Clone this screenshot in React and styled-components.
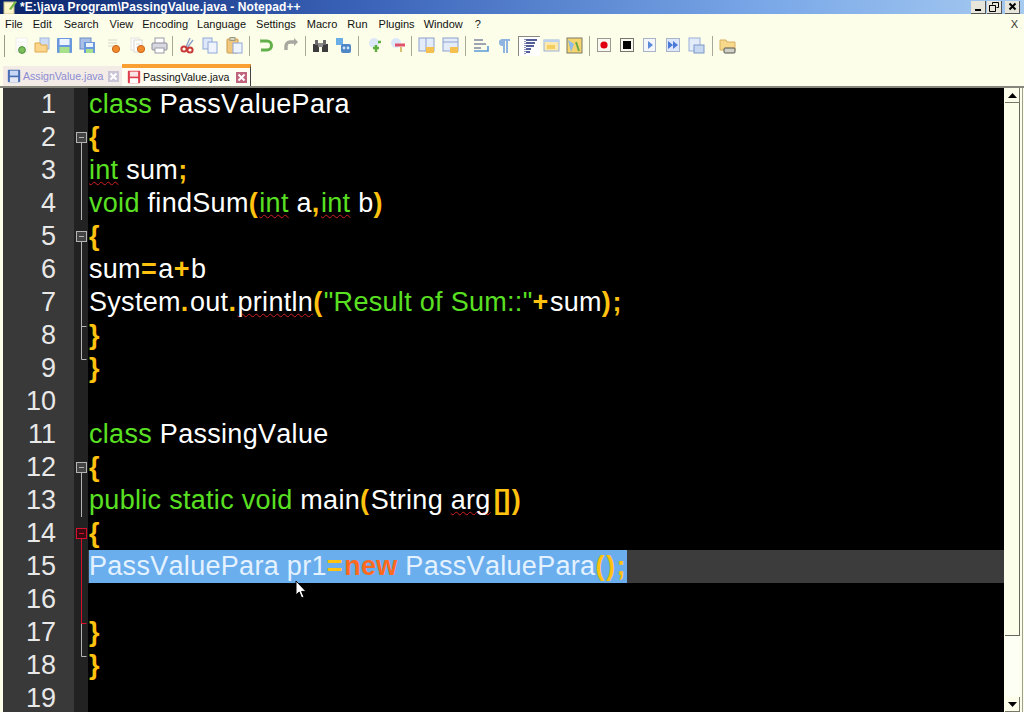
import React from "react";
import styled, { createGlobalStyle } from "styled-components";

const CREAM = "#fcfee9";

const GlobalStyle = createGlobalStyle`
	html, body {
		margin: 0;
		padding: 0;
		width: 1024px;
		height: 712px;
		overflow: hidden;
		background: ${CREAM};
	}
`;

const Win = styled.div`
	position: relative;
	width: 1024px;
	height: 712px;
	overflow: hidden;
	display: flex;
	flex-direction: column;
	background: ${CREAM};
	font-family: "Liberation Sans", Arial, sans-serif;
`;

const TitleBar = styled.div`
	flex: none;
	height: 14px;
	display: flex;
	align-items: center;
	padding: 0 4px 0 3px;
	background: linear-gradient(90deg, #0a246a 0%, #3a63b8 35%, #7aa8e8 75%, #a6caf0 100%);
	overflow: hidden;
`;

const TitleText = styled.span`
	margin-left: 3px;
	flex: 1;
	font-size: 12px;
	letter-spacing: 0.1px;
	font-weight: bold;
	line-height: 14px;
	color: #fff;
	white-space: pre;
`;

const WinBtn = styled.div`
	width: 15px;
	height: 13px;
	margin-left: ${({ $gap }) => $gap || 1}px;
	background: #e8e6da;
	border-right: 1px solid #555;
	border-bottom: 1px solid #555;
	box-sizing: border-box;
	display: flex;
	align-items: center;
	justify-content: center;
`;

const MenuBar = styled.div`
	flex: none;
	height: 19px;
	display: flex;
	align-items: center;
	font-size: 11px;
	color: #111;
`;

const MenuItem = styled.span`
	margin-left: ${({ $x }) => $x}px;
`;

const MenuClose = styled.span`
	margin-left: auto;
	margin-right: 6px;
	font-size: 11px;
	color: #333;
`;

const ToolBar = styled.div`
	flex: none;
	height: 25px;
	display: flex;
	align-items: center;
	padding-left: 4px;
`;

const Grip = styled.div`
	width: 1px;
	height: 22px;
	background: #9a9a88;
	margin-right: 7px;
`;

const Tool = styled.div`
	flex: none;
	width: ${({ $w }) => $w || 23}px;
	height: 20px;
	margin-left: ${({ $pressed }) => ($pressed ? 5 : 0)}px;
	box-sizing: border-box;
	display: flex;
	align-items: center;
	justify-content: center;
	${({ $pressed }) => $pressed && "border-left: 1px solid #8a8a80; border-top: 1px solid #8a8a80; background: #fff;"}
`;

const ToolSep = styled.div`
	flex: none;
	width: 1px;
	height: 20px;
	margin: 0 3px;
	background: #a8a898;
`;

const TabBar = styled.div`
	flex: none;
	height: 22px;
	margin-top: 6px;
	padding-left: 3px;
	display: flex;
	align-items: flex-end;
`;

const Tab = styled.div`
	box-sizing: border-box;
	height: ${({ $active }) => ($active ? 22 : 20)}px;
	width: ${({ $active }) => ($active ? 129 : 119)}px;
	display: flex;
	align-items: center;
	padding-left: ${({ $active }) => ($active ? 5 : 4)}px;
	font-size: 10.6px;
	color: ${({ $active }) => ($active ? "#111" : "#8c8cd2")};
	background: ${({ $active }) => ($active ? "#fffef2" : "#f2ebe6")};
	border-top: ${({ $active }) => ($active ? "4px solid #fa9f32" : "none")};
	border-right: ${({ $active }) => ($active ? "1px solid #444" : "none")};
`;

const TabLabel = styled.span`
	margin-left: 2px;
	width: ${({ $w }) => $w}px;
	white-space: nowrap;
`;

const TabClose = styled.div`
	width: 11px;
	height: 11px;
	background: ${({ $active }) => ($active ? "#c0647e" : "#c9c4d6")};
	display: flex;
	align-items: center;
	justify-content: center;
`;

const Workspace = styled.div`
	flex: 1;
	min-height: 0;
	display: flex;
	padding-left: 3px;
	border-top: 2px solid #86867c;
`;

const Editor = styled.div`
	flex: none;
	width: 1001px;
	background: #000;
	display: flex;
	flex-direction: column;
`;

const Row = styled.div`
	flex: none;
	height: 33px;
	display: flex;
`;

const LineNo = styled.div`
	flex: none;
	box-sizing: border-box;
	width: 71px;
	padding-right: 18px;
	background: #393939;
	color: #e8e8e8;
	text-align: right;
	font-size: 27px;
	line-height: 33px;
`;

const FoldCell = styled.div`
	flex: none;
	width: 14px;
	height: 33px;
	background: #222;
`;

const Code = styled.div`
	flex: 1;
	padding-left: 1px;
	background: ${({ $current }) => ($current ? "#3c3c3c" : "#000")};
	font-size: 27px;
	line-height: 33px;
	letter-spacing: 0.3px;
	white-space: pre;
	font-kerning: none;
	color: #fff;
`;

const Selection = styled.span`
	display: inline-block;
	height: 33px;
	background: #6aaeee;
	color: #e4f2ff;
`;

const KIND = {
	key: "color: #5ae022;",
	op: "color: #ffc20e; font-weight: bold; letter-spacing: 1.6px;",
	bracket: "color: #ffc20e; font-weight: bold; letter-spacing: -1.5px; margin-left: 3px; margin-right: 3px;",
	str: "color: #5ae022;",
	kw: "color: #ff6a1e; font-weight: bold;",
};

const Tok = styled.span`
	${({ $kind }) => KIND[$kind] || ""}
	${({ $wavy }) =>
		$wavy &&
		"text-decoration: underline wavy #d02020 1px; text-underline-offset: 2px; text-decoration-skip-ink: none;"}
`;

const Scrollbar = styled.div`
	flex: none;
	width: 15px;
	margin-left: 1px;
	display: flex;
	flex-direction: column;
	background: #fefff4;
`;

const ScrollBtn = styled.div`
	flex: none;
	height: 15px;
	box-sizing: border-box;
	background: ${CREAM};
	border-right: 1px solid #77776a;
	border-bottom: 1px solid #77776a;
	display: flex;
	align-items: center;
	justify-content: center;
`;

const Thumb = styled.div`
	flex: none;
	height: 533px;
	box-sizing: border-box;
	background: ${CREAM};
	border-right: 1px solid #66665a;
	border-bottom: 1px solid #66665a;
`;

const Track = styled.div`
	flex: 1;
`;

const RightEdge = styled.div`
	flex: none;
	width: 1px;
	margin-left: 2px;
	background: #a0a090;
`;

const MouseArrow = styled.svg`
	position: absolute;
	left: 295px;
	top: 580px;
`;

// toolbar pictures

const Floppy = ({ c = "#6a98dc", l = "#a8e08c" }) => (
	<svg width="17" height="17" viewBox="0 0 17 17">
		<rect x="1" y="1" width="15" height="15" rx="1" fill={c} />
		<rect x="3.5" y="2" width="10" height="6" fill="#eef4ff" />
		<rect x="3.5" y="10" width="10" height="6" fill={l} />
	</svg>
);

const Doc = ({ x = 3, y = 1, w = 11, h = 14, c = "#d6d6e0" }) => (
	<g>
		<rect x={x} y={y} width={w} height={h} fill="#fff" stroke={c} />
		<path d={`M${x + 2} ${y + 4}h${w - 4}M${x + 2} ${y + 7}h${w - 4}`} stroke={c} />
	</g>
);

const S = ({ children }) => (
	<svg width="17" height="17" viewBox="0 0 17 17">
		{children}
	</svg>
);

const icons = {
	new: (
		<S>
			<Doc c="#efefe6" />
			<circle cx="9" cy="13" r="3.4" fill="#7cbf5a" stroke="#4f8f3a" />
		</S>
	),
	open: (
		<S>
			<rect x="6" y="1" width="9" height="11" fill="#cfdcf5" stroke="#9db5dc" />
			<path d="M1 6h5l1 2h6v7H1z" fill="#fbd68a" stroke="#e0a84e" />
		</S>
	),
	save: <Floppy />,
	saveAll: (
		<S>
			<rect x="1" y="1" width="11" height="11" fill="#a9bfe6" stroke="#6d8cc8" />
			<rect x="5" y="5" width="11" height="11" fill="#6a98dc" />
			<rect x="7" y="6" width="7" height="4" fill="#eef4ff" />
			<rect x="7" y="12" width="7" height="4" fill="#a8e08c" />
		</S>
	),
	close: (
		<S>
			<path d="M3 3h9M3 6h9M3 9h6" stroke="#d8d8d0" />
			<circle cx="11" cy="12" r="3.6" fill="#f08a2c" stroke="#c8641a" />
		</S>
	),
	closeAll: (
		<S>
			<Doc x={1} y={1} w={8} h={12} c="#e4e4dc" />
			<Doc x={4} y={3} w={8} h={12} c="#d8d8d0" />
			<circle cx="11" cy="12" r="3.6" fill="#f08a2c" stroke="#c8641a" />
		</S>
	),
	print: (
		<S>
			<rect x="4" y="1" width="9" height="6" fill="#fff" stroke="#9a9aa8" />
			<rect x="1" y="6" width="15" height="7" rx="1" fill="#d8d8e0" stroke="#8a8a98" />
			<rect x="4" y="11" width="9" height="5" fill="#fff" stroke="#9a9aa8" />
		</S>
	),
	cut: (
		<S>
			<path d="M11 1L7 10M14 3L8 11" stroke="#8fa0c8" strokeWidth="1.4" />
			<circle cx="5" cy="12" r="2.6" fill="none" stroke="#c83a3a" strokeWidth="2" />
			<circle cx="11" cy="13" r="2.6" fill="none" stroke="#c83a3a" strokeWidth="2" />
		</S>
	),
	copy: (
		<S>
			<rect x="1" y="1" width="9" height="11" fill="#dfe8fa" stroke="#8fa8d8" />
			<rect x="6" y="5" width="9" height="11" fill="#eef3fd" stroke="#8fa8d8" />
		</S>
	),
	paste: (
		<S>
			<rect x="1" y="2" width="11" height="14" rx="1" fill="#f2c77e" stroke="#c89a4e" />
			<rect x="4" y="0.5" width="5" height="3" fill="#d8d8c8" stroke="#a09a80" />
			<rect x="7" y="6" width="9" height="10" fill="#eef3fd" stroke="#8fa8d8" />
		</S>
	),
	undo: (
		<S>
			<path d="M3 4h6a4 4 0 0 1 0 9H3" fill="none" stroke="#62b04a" strokeWidth="3" />
			<path d="M3 1v6l-1-3z" fill="#62b04a" />
		</S>
	),
	redo: (
		<S>
			<path d="M14 5H8a4 4 0 0 0-4 4v4" fill="none" stroke="#a8a8a0" strokeWidth="3.4" />
			<path d="M12 1l4 4-4 4z" fill="#a8a8a0" />
		</S>
	),
	find: (
		<S>
			<rect x="1" y="7" width="6" height="8" fill="#3c3c3c" />
			<rect x="10" y="7" width="6" height="8" fill="#3c3c3c" />
			<rect x="3" y="3" width="3" height="5" fill="#6a6a6a" />
			<rect x="11" y="3" width="3" height="5" fill="#6a6a6a" />
			<rect x="6" y="6" width="5" height="4" fill="#8a8a8a" />
		</S>
	),
	replace: (
		<S>
			<rect x="1" y="1" width="7" height="7" fill="#6aaee8" />
			<rect x="6" y="7" width="10" height="9" rx="2" fill="#4f86c8" />
			<circle cx="9" cy="11" r="1.4" fill="#cfe4fa" />
			<circle cx="13" cy="11" r="1.4" fill="#cfe4fa" />
		</S>
	),
	zoomIn: (
		<S>
			<circle cx="7" cy="6" r="5" fill="#dce8fa" />
			<path d="M11 5h3M9 8v7M6 11h6" stroke="#5cae3e" strokeWidth="2.4" />
		</S>
	),
	zoomOut: (
		<S>
			<circle cx="6" cy="6" r="5" fill="#dce8fa" />
			<path d="M5 8h10" stroke="#e0526a" strokeWidth="3" />
			<path d="M11 10v5" stroke="#d8c070" strokeWidth="2" />
		</S>
	),
	syncV: (
		<S>
			<rect x="1" y="1" width="15" height="13" fill="#e4ecfa" stroke="#8aa2d0" />
			<path d="M8 1v13" stroke="#8aa2d0" />
			<rect x="8" y="10" width="8" height="6" fill="#f4c050" />
		</S>
	),
	syncH: (
		<S>
			<rect x="1" y="1" width="15" height="13" fill="#e4ecfa" stroke="#8aa2d0" />
			<path d="M1 5h15" stroke="#8aa2d0" />
			<rect x="8" y="10" width="8" height="6" fill="#f4c050" />
		</S>
	),
	wrap: (
		<S>
			<path d="M1 3h9M1 7h12M1 11h7" stroke="#3c4c7a" strokeWidth="1.2" />
			<path d="M1 14h14V9" fill="none" stroke="#5a9ad8" strokeWidth="1.6" />
		</S>
	),
	para: (
		<S>
			<path d="M7 2h8v2h-2v12h-2V4h-1v12H8V9a3.5 3.5 0 0 1-1-7z" fill="#8fb4e0" />
		</S>
	),
	guide: (
		<S>
			<path d="M4 1v15" stroke="#1c2a78" strokeDasharray="1 1" />
			<path d="M5 2h11M5 5h9M5 8h8M5 11h5M5 14h4" stroke="#1c2a78" strokeWidth="1.6" />
		</S>
	),
	panel: (
		<S>
			<rect x="1" y="3" width="15" height="11" fill="#fbe9b0" stroke="#9ab4dc" />
			<rect x="1" y="3" width="15" height="2" fill="#bcd2f0" />
			<rect x="4" y="8" width="8" height="4" fill="#f4cf60" />
		</S>
	),
	map: (
		<S>
			<rect x="1" y="1" width="15" height="15" fill="#f6d46e" stroke="#7a7a68" />
			<path d="M2 3l6 4-3 8" fill="#8fbce8" />
			<path d="M10 5l3 9" stroke="#6aa84a" strokeWidth="2" />
		</S>
	),
	rec: (
		<S>
			<rect x="1.5" y="1.5" width="13" height="13" fill="#f8f8f0" stroke="#9a9a90" />
			<circle cx="8" cy="8" r="3.6" fill="#e00010" />
		</S>
	),
	stop: (
		<S>
			<rect x="1.5" y="1.5" width="13" height="13" fill="#f8f8f0" stroke="#77776c" />
			<rect x="4" y="4" width="8" height="8" fill="#000" />
		</S>
	),
	play: (
		<S>
			<rect x="1.5" y="1.5" width="12" height="13" fill="#f4f6fa" stroke="#a8b4c8" />
			<path d="M6 4l5 4-5 4z" fill="#5a8ad8" />
		</S>
	),
	playMany: (
		<S>
			<rect x="1.5" y="1.5" width="13" height="13" fill="#dfe8fa" stroke="#a8b4c8" />
			<path d="M3 4l5 4-5 4zM8 4l5 4-5 4z" fill="#4a7ad8" />
		</S>
	),
	saveMacro: (
		<S>
			<rect x="1" y="1" width="11" height="13" fill="#e4ecfa" stroke="#9ab0d8" />
			<rect x="6" y="8" width="10" height="8" fill="#c8d8f0" stroke="#7a98c8" />
		</S>
	),
	folder: (
		<S>
			<path d="M1 3h6l1 2h8v8H1z" fill="#f8d98c" stroke="#d8b060" />
			<rect x="5" y="11" width="11" height="5" rx="1" fill="#d0d0c4" stroke="#555" />
		</S>
	),
};

const toolbar = [
	["new", 19], ["open", 22], ["save"], ["saveAll"], ["close", 29], ["closeAll", 21], ["print", 20], "sep",
	["cut"], ["copy"], ["paste", 24], "sep",
	["undo", 26], ["redo"], "sep",
	["find"], ["replace"], "sep",
	["zoomIn", 26], ["zoomOut", 20], "sep",
	["syncV"], ["syncH", 24], "sep",
	["wrap", 25], ["para", 19], ["guide", 22, true], ["panel"], ["map"], "sep",
	["rec"], ["stop"], ["play"], ["playMany", 22], ["saveMacro", 25], "sep",
	["folder"],
];

const menus = [
	["File", 5], ["Edit", 10], ["Search", 12], ["View", 11], ["Encoding", 9], ["Language", 9], ["Settings", 10],
	["Macro", 11], ["Run", 10], ["Plugins", 11], ["Window", 9], ["?", 12],
];

const t = (text) => ({ text });
const k = (text) => ({ text, kind: "key" });
const o = (text) => ({ text, kind: "op" });
const w = (text, kind) => ({ text, kind, wavy: true });

const lines = [
	{ code: [k("class"), t(" PassValuePara")] },
	{ fold: "box", code: [o("{")] },
	{ fold: "line", code: [w("int", "key"), t(" sum"), o(";")] },
	{
		fold: "line",
		code: [k("void"), t(" findSum"), o("("), w("int", "key"), t(" a"), o(","), w("int", "key"), t(" b"), o(")")],
	},
	{ fold: "box", code: [o("{")] },
	{ fold: "line", code: [t("sum"), o("="), t("a"), o("+"), t("b")] },
	{
		fold: "line",
		code: [
			t("System"), o("."), t("out"), o("."), w("println"), o("("),
			{ text: '"Result of Sum::"', kind: "str" }, o("+"), t("sum"), o(")"), o(";"),
		],
	},
	{ fold: "tee", code: [o("}")] },
	{ fold: "end", code: [o("}")] },
	{ code: [] },
	{ code: [k("class"), t(" PassingValue")] },
	{ fold: "box", code: [o("{")] },
	{
		fold: "line",
		code: [
			k("public static void"), t(" main"), o("("), t("String "), w("arg"),
			{ text: "[]", kind: "bracket" }, o(")"),
		],
	},
	{ fold: "redBox", code: [o("{")] },
	{
		fold: "redLine",
		current: true,
		selected: true,
		code: [t("PassValuePara pr1"), o("="), { text: "new", kind: "kw" }, t(" PassValuePara"), o("()"), o(";")],
	},
	{ fold: "redLine", code: [] },
	{ fold: "redEnd", code: [o("}")] },
	{ fold: "end", code: [o("}")] },
	{ code: [] },
];

const FoldMark = ({ type }) => {
	if (!type) return null;
	const grey = "#b4b4b4";
	const red = "#d81030";
	const isRed = type.startsWith("red");
	const c = isRed ? red : grey;
	return (
		<svg width="14" height="33" viewBox="0 0 14 33" style={{ display: "block" }}>
			{(type === "box" || type === "redBox") && (
				<g>
					<path d="M7.5 22v11" stroke={c} />
					<rect x="2.5" y="11.5" width="10" height="10" fill={isRed ? "#3a0a10" : "#444"} stroke={c} />
					<path d="M5 16.5h5" stroke={c} />
				</g>
			)}
			{(type === "line" || type === "redLine") && <path d="M7.5 0v33" stroke={c} />}
			{type === "tee" && <path d="M7.5 0v33M7.5 7.5h5" stroke={grey} />}
			{type === "end" && <path d="M7.5 0v7.5h5" fill="none" stroke={grey} />}
			{type === "redEnd" && (
				<g>
					<path d="M7.5 7v26" stroke={grey} />
					<path d="M7.5 0v7.5h5" fill="none" stroke={red} />
				</g>
			)}
		</svg>
	);
};

const Cross = ({ c = "#fff" }) => (
	<svg width="9" height="9" viewBox="0 0 9 9">
		<path d="M1.5 1.5l6 6M7.5 1.5l-6 6" stroke={c} strokeWidth="2" />
	</svg>
);

const renderTokens = (code) =>
	code.map((tok, i) => (
		<Tok key={i} $kind={tok.kind} $wavy={tok.wavy}>
			{tok.text}
		</Tok>
	));

export default function App() {
	return (
		<Win>
			<GlobalStyle />
			<TitleBar>
				<svg width="14" height="14" viewBox="0 0 14 14">
					<rect x="1" y="2" width="10" height="12" fill="#fdf6c8" stroke="#c8c090" />
					<path d="M6 9l6-8 2 1-6 8z" fill="#7ab648" />
				</svg>
				<TitleText>{"*E:\\java Program\\PassingValue.java - Notepad++"}</TitleText>
				<WinBtn>
					<svg width="9" height="9" viewBox="0 0 9 9">
						<rect x="1" y="7" width="6" height="2" fill="#000" />
					</svg>
				</WinBtn>
				<WinBtn>
					<svg width="10" height="10" viewBox="0 0 10 10">
						<path d="M3.5 2.5V.5h6v5h-2M.5 3.5h6v6h-6zM.5 3.5h6" fill="none" stroke="#000" />
					</svg>
				</WinBtn>
				<WinBtn $gap={3}>
					<Cross c="#000" />
				</WinBtn>
			</TitleBar>
			<MenuBar>
				{menus.map(([label, x]) => (
					<MenuItem key={label} $x={x}>
						{label}
					</MenuItem>
				))}
				<MenuClose>X</MenuClose>
			</MenuBar>
			<ToolBar>
				<Grip />
				{toolbar.map((item, i) =>
					item === "sep" ? (
						<ToolSep key={i} />
					) : (
						<Tool key={i} $w={item[1]} $pressed={item[2]}>
							{icons[item[0]]}
						</Tool>
					)
				)}
			</ToolBar>
			<TabBar>
				<Tab>
					<svg width="14" height="14" viewBox="0 0 17 17">
						<rect x="1" y="1" width="15" height="15" rx="1" fill="#4a6fb4" />
						<rect x="3.5" y="2" width="10" height="6" fill="#c8d8f4" />
						<rect x="3.5" y="10" width="10" height="6" fill="#e4e8f4" />
					</svg>
					<TabLabel $w={85}>AssignValue.java</TabLabel>
					<TabClose>
						<Cross />
					</TabClose>
				</Tab>
				<Tab $active>
					<svg width="14" height="14" viewBox="0 0 17 17">
						<rect x="1" y="1" width="15" height="15" rx="1" fill="#e0404e" />
						<rect x="3.5" y="2" width="10" height="6" fill="#fbe4e4" />
						<rect x="3.5" y="10" width="10" height="6" fill="#fff" />
					</svg>
					<TabLabel $w={93}>PassingValue.java</TabLabel>
					<TabClose $active>
						<Cross />
					</TabClose>
				</Tab>
			</TabBar>
			<Workspace>
				<Editor>
					{lines.map((line, i) => (
						<Row key={i}>
							<LineNo>{i + 1}</LineNo>
							<FoldCell>
								<FoldMark type={line.fold} />
							</FoldCell>
							<Code $current={line.current}>
								{line.selected ? (
									<Selection>{renderTokens(line.code)}</Selection>
								) : (
									renderTokens(line.code)
								)}
							</Code>
						</Row>
					))}
				</Editor>
				<Scrollbar>
					<ScrollBtn>
						<svg width="9" height="5" viewBox="0 0 9 5">
							<path d="M4.5 0L9 5H0z" fill="#000" />
						</svg>
					</ScrollBtn>
					<Thumb />
					<Track />
					<ScrollBtn>
						<svg width="9" height="5" viewBox="0 0 9 5">
							<path d="M0 0h9L4.5 5z" fill="#000" />
						</svg>
					</ScrollBtn>
				</Scrollbar>
				<RightEdge />
			</Workspace>
			<MouseArrow width="12" height="20" viewBox="0 0 12 20">
				<path d="M1 1v14l3.2-3 2.4 6 2.4-1-2.4-5.6H11z" fill="#fff" stroke="#000" strokeWidth="1" />
			</MouseArrow>
		</Win>
	);
}
